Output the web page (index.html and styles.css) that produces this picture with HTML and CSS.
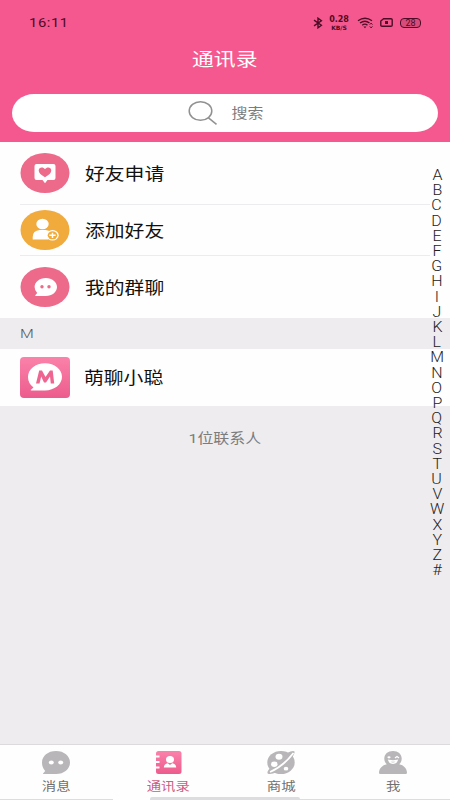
FILE: index.html
```html
<!DOCTYPE html>
<html lang="zh-CN">
<head>
<meta charset="utf-8">
<title>通讯录</title>
<link rel="stylesheet" href="styles.css">
</head>
<body>
<div class="app">
  <header class="header">
    <div class="status">
      <span class="clock">16:11</span>
      <svg class="status-icon bt" width="10" height="12" viewBox="0 0 10 12"><path d="M1 3.2 8.4 8.2 5 10.8V1.2L8.4 3.8 1 8.8"/></svg>
      <span class="speed"><b>0.28</b><b class="unit">KB/S</b></span>
      <svg class="status-icon wifi" width="17" height="12" viewBox="0 0 17 12"><path d="M1 3.8Q8 -1.2 15 3.8M3 6Q8 2.5 12.5 6M5.2 8.2Q8 6 10.5 8.2"/><path class="solid" d="M6.4 9.5h3L8 11.2z"/><path class="thin" d="m12.8 7.6 1.3-1.5 1.3 1.5M12.8 9.4l1.3 1.5 1.3-1.5"/></svg>
      <svg class="status-icon sim" width="13" height="9" viewBox="0 0 13 9"><path d="M3.6.8H11q1.2 0 1.2 1V7.200q0 1-1.2 1H2q-1.200 0-1.200-1V3z"/><path class="solid" d="M5 3h3v3H5z"/></svg>
      <span class="battery">28</span>
    </div>
    <h1 class="title"><span class="wide">通讯录</span></h1>
    <div class="search">
      <svg width="30" height="26" viewBox="0 0 30 26"><ellipse cx="12.500" cy="11" rx="11.300" ry="9.300"/><path d="m20.500 17.800 8 6.500"/></svg>
      <span class="wide">搜索</span>
    </div>
  </header>
  <main class="content">
    <section class="menu">
      <div class="row row-first">
        <svg class="icon" width="50" height="40" viewBox="0 0 50 40"><ellipse cx="25" cy="20" rx="24.500" ry="20" fill="#ed6a8b"/><path fill="#fff" d="M16.500 11h17q2 0 2 2v12q0 2-2 2h-6L25 30.300 22.500 27h-6q-2 0-2-2V13q0-2 2-2z"/><path fill="#ed6a8b" d="M25 24.200c-4-2.500-6.300-4.300-6.300-6.800 0-3.500 4.600-4 6.300-1.100 1.700-2.900 6.300-2.400 6.300 1.100 0 2.500-2.300 4.300-6.300 6.800z"/></svg>
        <span class="wide label">好友申请</span>
      </div>
      <div class="row row-middle">
        <svg class="icon" width="50" height="40" viewBox="0 0 50 40"><ellipse cx="25" cy="20" rx="24.500" ry="20" fill="#f1aa3c"/><g fill="#fff"><ellipse cx="22.500" cy="14" rx="6.200" ry="5.300"/><path d="M12.700 29.500v-2.500q0-6.500 7-7h6q3.500.3 5 2-4.800 3-2.300 7.500z"/></g><ellipse cx="32.500" cy="25.300" rx="6.200" ry="5.200" fill="#fff"/><ellipse cx="32.500" cy="25.300" rx="4.800" ry="4" fill="#f1aa3c"/><path d="M29.300 25.300h6.400M32.500 22.700v5.200" stroke="#fff" stroke-width="1.500"/></svg>
        <span class="wide label">添加好友</span>
      </div>
      <div class="row row-last">
        <svg class="icon" width="50" height="40" viewBox="0 0 50 40"><ellipse cx="25" cy="20" rx="24.500" ry="20" fill="#ed6a8b"/><path fill="#fff" d="M25.800 11c6.300 0 11.200 4 11.200 9s-4.900 9-11.200 9H15.700q-1.300-.2 0-1.200l1.500-1.800q-2.600-2.500-2.600-6c0-5 4.900-9 11.200-9z"/><circle cx="22" cy="19.800" r="1.700" fill="#ed6a8b"/><circle cx="29" cy="19.800" r="1.700" fill="#ed6a8b"/></svg>
        <span class="wide label">我的群聊</span>
      </div>
    </section>
    <h2 class="letter"><span class="wide">M</span></h2>
    <div class="row contact">
      <svg class="icon" width="50" height="41" viewBox="0 0 50 41"><defs><linearGradient id="pink" x1="0" y1="0" x2="0" y2="1"><stop offset="0" stop-color="#fb82aa"/><stop offset="1" stop-color="#ec5c8c"/></linearGradient></defs><rect width="50" height="41" rx="4" fill="url(#pink)"/><path fill="#fff" d="M25 6.300c9.500 0 17 6 17 13.500s-7.500 13.700-17 13.700H11q-1-.6.500-1.300l2-1.800Q8 26.500 8 20C8 12.300 15.500 6.300 25 6.300z"/><path d="M16 26.500 19.200 13.500H22L25.500 20 30 13.500H32.700L34.200 26.500H30.800L30 19.500 26 25.500H24L21.200 19.500 19.500 26.500z" fill="#ee6592"/></svg>
      <span class="wide label">萌聊小聪</span>
    </div>
    <p class="count"><span class="wide">1位联系人</span></p>
    <nav class="alphabet">
      <span>A</span><span>B</span><span>C</span><span>D</span><span>E</span><span>F</span><span>G</span><span>H</span><span>I</span><span>J</span><span>K</span><span>L</span><span>M</span><span>N</span><span>O</span><span>P</span><span>Q</span><span>R</span><span>S</span><span>T</span><span>U</span><span>V</span><span>W</span><span>X</span><span>Y</span><span>Z</span><span>#</span>
    </nav>
  </main>
  <footer class="tabs">
    <div class="tab">
      <svg width="30" height="25" viewBox="0 0 30 25"><path fill="#b8b6b8" d="M15 1c8 0 14 4.900 14 11.500S23 24 15 24H2.500q-1.200-.4.200-1.200L4.200 21Q1 17.500 1 12.500C1 5.900 7 1 15 1z"/><ellipse cx="10.300" cy="12.500" rx="2.500" ry="2" fill="#fff"/><ellipse cx="19.700" cy="12.500" rx="2.500" ry="2" fill="#fff"/></svg>
      <span class="wide">消息</span>
    </div>
    <div class="tab active">
      <svg width="30" height="25" viewBox="0 0 30 25"><rect x="2" y="1" width="25.500" height="23" rx="2.500" fill="url(#pink)"/><path d="M.5 6.500h5M.5 12h5M.5 17.500h5" stroke="#fff" stroke-width="2.200"/><ellipse cx="16" cy="9.500" rx="4" ry="3.500" fill="#fff"/><path fill="#fff" d="M9.800 17.600q0-3.700 4-4.300L16 15l2.200-1.700q4 .6 4 4.300z"/></svg>
      <span class="wide">通讯录</span>
    </div>
    <div class="tab">
      <svg width="30" height="25" viewBox="0 0 30 25"><ellipse cx="15" cy="12.500" rx="13.700" ry="11.500" fill="#b8b6b8"/><path fill="#b8b6b8" d="M21 3q6-3 7.500-1.500Q29 3 26 8zM5 17q-5 5-3 6.700 3 1 9-1.700z"/><path d="M4 22Q17 16.500 27.500 3" fill="none" stroke="#fff" stroke-width="1.800"/><g fill="#fff"><ellipse cx="13" cy="6.800" rx="3.500" ry="3"/><ellipse cx="8.300" cy="14.300" rx="3.200" ry="2.700"/><ellipse cx="20" cy="18.700" rx="2.300" ry="1.900"/></g></svg>
      <span class="wide">商城</span>
    </div>
    <div class="tab tab-me">
      <svg width="30" height="25" viewBox="0 0 30 25"><path fill="#b8b6b8" d="M15 1c5 0 8.700 3.100 8.700 7.500 0 2.500-1 4.300-2.500 5.700 4.500 1 7.500 4 7.800 8.300 0 1-.7 1.500-1.500 1.500h-25C1.700 24 1 23.500 1 22.500c.3-4.300 3.300-7.300 7.800-8.300-1.500-1.400-2.500-3.200-2.500-5.700C6.300 4.100 10 1 15 1z"/><ellipse cx="11" cy="7.300" rx="1.600" ry="1.100" fill="#fff"/><path fill="none" stroke="#fff" stroke-width="1.200" d="m17 8 2-1.500L21 8"/><path fill="none" stroke="#fff" stroke-width="1.500" d="M11 10.500q4 1 8 0-1 2.700-4 2.700t-4-2.700z"/></svg>
      <span class="wide">我</span>
    </div>
    <div class="edge"><i class="edge-left"></i><i class="edge-center"></i><i class="edge-right"></i></div>
  </footer>
</div>
</body>
</html>
```
FILE: styles.css
```css
* { box-sizing: border-box; }
body {
  margin: 0;
  font-family: "Noto Sans", "Noto Sans CJK SC", sans-serif;
}
.app {
  width: 450px;
  height: 800px;
  display: flex;
  flex-direction: column;
  background: #eeecee;
  overflow: hidden;
}
.wide {
  display: inline-block;
  transform: scaleX(1.18);
  font-family: Roboto, "Noto Sans CJK SC", sans-serif;
  font-weight: 400;
  white-space: nowrap;
}

.header {
  height: 142px;
  background: #f5588e;
  flex: none;
}
.status {
  height: 45px;
  padding: 0 29px;
  display: flex;
  align-items: center;
  color: #4d0c26;
}
.clock {
  margin-right: auto;
  padding-top: 1px;
  font: 400 13px/20px Roboto, sans-serif;
  letter-spacing: .5px;
  transform: scaleX(1.14);
  transform-origin: left;
}
.status-icon {
  fill: none;
  stroke: #4d0c26;
  stroke-width: 1.4;
}
.status-icon .solid { fill: #4d0c26; stroke: none; }
.status-icon .thin { stroke-width: 1; }
.speed {
  width: 22px;
  margin: 0 7px 0 5px;
  display: flex;
  flex-direction: column;
  align-items: center;
}
.speed b { font: 700 8px/9px "DejaVu Sans", sans-serif; }
.speed .unit { font-size: 6px; line-height: 7px; }
.sim { margin: 0 7px 0 6px; }
.battery {
  width: 21px;
  height: 10px;
  border: 1.500px solid #4d0c26;
  border-radius: 4px;
  background: #d84c7c;
  font: 9px/8px Roboto, sans-serif;
  text-align: center;
}
.title {
  height: 49px;
  margin: 0;
  font-size: 18.500px;
  line-height: 27px;
  text-align: center;
  color: #fff;
}
.search {
  width: 426px;
  height: 38px;
  margin-left: 12px;
  display: flex;
  align-items: center;
  padding-left: 176px;
  gap: 16px;
  border-radius: 22px / 19px;
  background: #fff;
  color: #7c7c7c;
  font-size: 13.500px;
}
.search svg { fill: none; stroke: #929092; stroke-width: 1.500; }
.search .wide { line-height: 18px; }

.content {
  position: relative;
  flex: 1;
}
.menu { background: #fefefe; }
.row {
  display: flex;
  align-items: center;
  padding-left: 20px;
  color: #111;
}
.row-first { height: 62px; }
.row-middle { height: 52px; }
.row-last { height: 62px; }
.row-middle {
  margin: 0 20px;
  padding-left: 0;
  border-top: 1px solid #ececee;
  border-bottom: 1px solid #ececee;
}
.icon { flex: none; }
.label {
  margin-left: 15px;
  padding-top: 1px;
  font-size: 16.800px;
  line-height: 24px;
  transform-origin: left;
}
.contact .label { margin-left: 14px; }
.letter {
  height: 31px;
  margin: 0;
  padding-left: 20px;
  font-size: 13.500px;
  line-height: 31px;
}
.letter .wide { transform-origin: left; font-weight: 300; color: #555; }
.contact { height: 57px; background: #fefefe; }
.count {
  margin: 21px 0 0;
  font-size: 13.500px;
  line-height: 22px;
  text-align: center;
  color: #7c7c7c;
}
.alphabet {
  position: absolute;
  top: 26px;
  right: 3px;
  width: 20px;
  display: flex;
  flex-direction: column;
  align-items: center;
  font: 300 14px/15.200px Roboto, sans-serif;
  color: #222;
}
.alphabet span { transform: scaleX(1.14); }

.tabs {
  height: 56px;
  flex: none;
  display: grid;
  grid-template-columns: repeat(4, 112.500px);
  grid-template-rows: 51px 4px;
  border-top: 1px solid #dcdadc;
  background: #fefefe;
}
.tab {
  display: flex;
  flex-direction: column;
  align-items: center;
  padding-top: 5px;
  color: #707070;
}
.tab-me { padding-right: 2px; }
.tab svg { flex: none; }
.tab span { font-size: 12.200px; line-height: 24px; }
.active span { color: #cc5c85; }
.edge {
  grid-column: 1 / -1;
  display: flex;
  align-items: flex-end;
}
.edge i { background: #dddddf; }
.edge-left { width: 113px; height: 1px; }
.edge-center { width: 150px; height: 3px; margin-left: 37px; border-radius: 2px 2px 0 0; }
.edge-right { flex: 1; height: 1px; }
```
